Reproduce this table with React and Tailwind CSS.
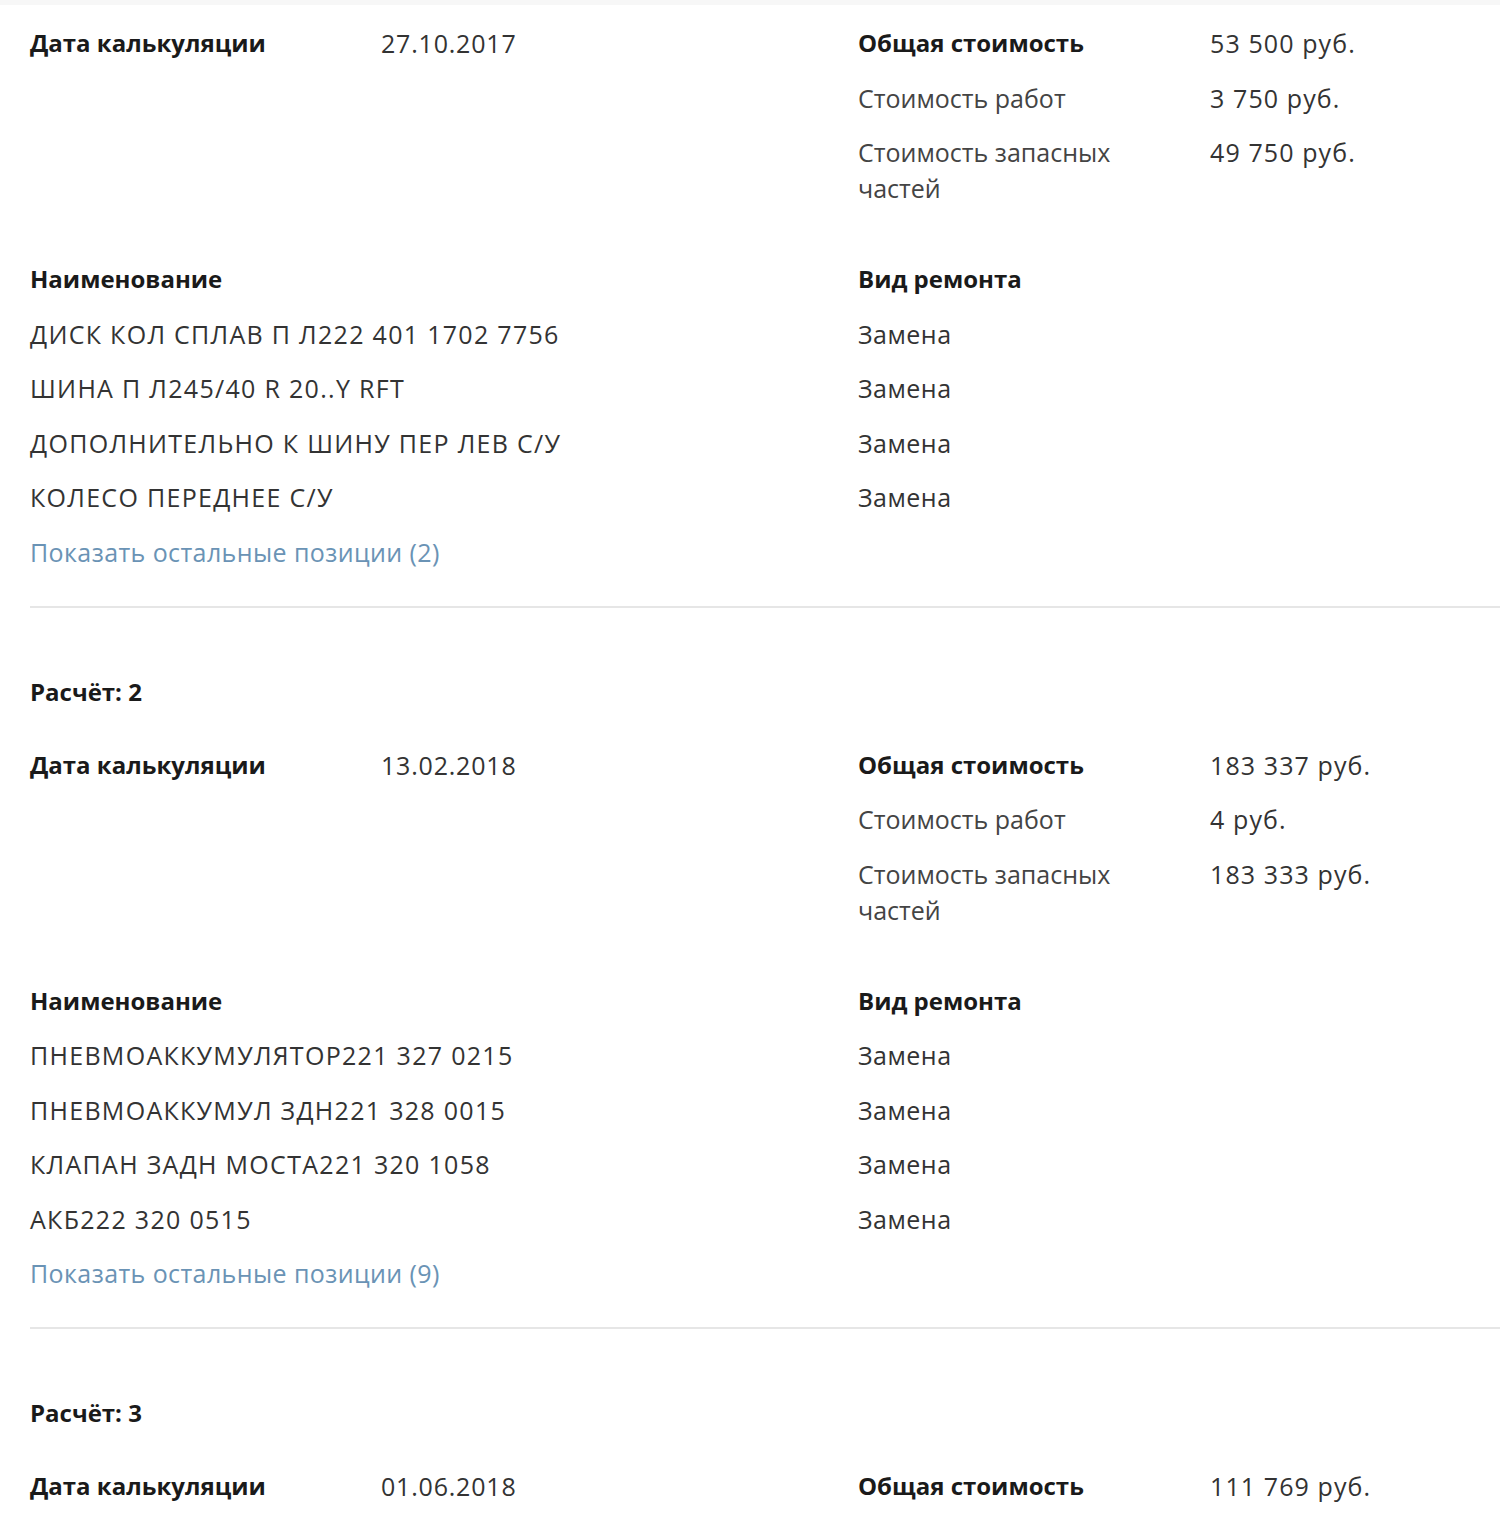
import React from 'react';

// Calculation blocks shown in the repair history list
const calculations = [
  {
    number: 1,
    date: '27.10.2017',
    total: '53 500 руб.',
    works: '3 750 руб.',
    parts: '49 750 руб.',
    items: [
      'ДИСК КОЛ СПЛАВ П Л222 401 1702 7756',
      'ШИНА П Л245/40 R 20..Y RFT',
      'ДОПОЛНИТЕЛЬНО К ШИНУ ПЕР ЛЕВ С/У',
      'КОЛЕСО ПЕРЕДНЕЕ С/У',
    ],
    more: 2,
  },
  {
    number: 2,
    date: '13.02.2018',
    total: '183 337 руб.',
    works: '4 руб.',
    parts: '183 333 руб.',
    items: [
      'ПНЕВМОАККУМУЛЯТОР221 327 0215',
      'ПНЕВМОАККУМУЛ ЗДН221 328 0015',
      'КЛАПАН ЗАДН МОСТА221 320 1058',
      'АКБ222 320 0515',
    ],
    more: 9,
  },
  {
    number: 3,
    date: '01.06.2018',
    total: '111 769 руб.',
    works: '',
    parts: '',
    items: [],
    more: 0,
  },
];

const Calculation = ({ calc, showTitle }) => (
  <div>
    {showTitle && (
      <div className="mt-[66px] mb-[37px] font-bold text-[#1a1a1a]">
        Расчёт: {calc.number}
      </div>
    )}

    {/* Date and cost summary */}
    <div className="grid grid-cols-[351px_477px_352px_1fr]">
      <div className="font-bold text-[#1a1a1a]">Дата калькуляции</div>
      <div className="text-[25px] tracking-[0.8px] text-[#333]">{calc.date}</div>
      <div className="col-span-2 flex flex-col gap-[18.5px]">
        <div className="grid grid-cols-[352px_1fr]">
          <div className="font-bold text-[#1a1a1a]">Общая стоимость</div>
          <div className="text-[25px] tracking-[1.1px] text-[#333]">{calc.total}</div>
        </div>
        {calc.works && (
          <div className="grid grid-cols-[352px_1fr]">
            <div className="text-[25px] text-[#444]">Стоимость работ</div>
            <div className="text-[25px] tracking-[1.1px] text-[#333]">{calc.works}</div>
          </div>
        )}
        {calc.parts && (
          <div className="grid grid-cols-[352px_1fr]">
            <div className="text-[25px] text-[#444] pr-[60px]">Стоимость запасных частей</div>
            <div className="text-[25px] tracking-[1.1px] text-[#333]">{calc.parts}</div>
          </div>
        )}
      </div>
    </div>

    {/* Items list */}
    {calc.items.length > 0 && (
      <>
        <div className="mt-[55px] flex flex-col gap-[18.5px]">
          <div className="grid grid-cols-[828px_1fr]">
            <div className="font-bold text-[#1a1a1a]">Наименование</div>
            <div className="font-bold text-[#1a1a1a]">Вид ремонта</div>
          </div>
          {calc.items.map((item) => (
            <div key={item} className="grid grid-cols-[828px_1fr] text-[25px] text-[#333]">
              <div className="tracking-[1.3px]">{item}</div>
              <div className="tracking-[0.5px]">Замена</div>
            </div>
          ))}
          <div className="text-[25px] tracking-[0.4px] text-[#6a93b5]">
            Показать остальные позиции ({calc.more})
          </div>
        </div>
        <div className="mt-[36px] h-[2px] bg-[#e6e6e6]" />
      </>
    )}
  </div>
);

export default function App() {
  return (
    <div className="min-h-screen bg-white" style={{ fontFamily: '"Open Sans", "Noto Sans", sans-serif' }}>
      <div className="h-[5px] bg-[#f7f7f7]" />
      <div className="pl-[30px] pt-[20px] text-[24px] leading-[36px] overflow-hidden h-[1509px]">
        {calculations.map((calc, i) => (
          <Calculation key={calc.number} calc={calc} showTitle={i > 0} />
        ))}
      </div>
    </div>
  );
}
